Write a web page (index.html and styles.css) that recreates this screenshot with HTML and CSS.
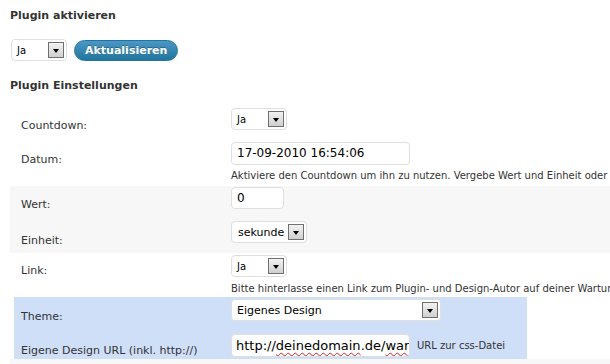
FILE: index.html
```html
<!DOCTYPE html>
<html lang="de">
<head>
    <meta charset="UTF-8">
    <title>Countdown Plugin</title>
    <link rel="stylesheet" href="styles.css">
</head>
<body>
<div class="wrap">
    <h3>Plugin aktivieren</h3>
    <div class="activate">
        <div class="select sel-ja"><span>Ja</span><i class="arrow"></i></div>
        <button class="button-primary">Aktualisieren</button>
    </div>
    <h3>Plugin Einstellungen</h3>
    <div class="form-table">
        <div class="row r-countdown">
            <div class="label">Countdown:</div>
            <div class="field">
                <div class="select sel-ja"><span>Ja</span><i class="arrow"></i></div>
            </div>
        </div>
        <div class="row r-datum">
            <div class="label">Datum:</div>
            <div class="field">
                <div class="text w-date">17-09-2010 16:54:06</div>
                <div class="desc">Aktiviere den Countdown um ihn zu nutzen. Vergebe Wert und Einheit oder wähle ein festes Datum.</div>
            </div>
        </div>
        <div class="row alt r-wert">
            <div class="label">Wert:</div>
            <div class="field">
                <div class="text w-wert">0</div>
            </div>
        </div>
        <div class="row alt r-einheit">
            <div class="label">Einheit:</div>
            <div class="field">
                <div class="select sel-unit"><span>sekunde</span><i class="arrow"></i></div>
            </div>
        </div>
        <div class="row r-link">
            <div class="label">Link:</div>
            <div class="field">
                <div class="select sel-ja"><span>Ja</span><i class="arrow"></i></div>
                <div class="desc">Bitte hinterlasse einen Link zum Plugin- und Design-Autor auf deiner Wartungsseite. Danke!</div>
            </div>
        </div>
        <div class="theme-box">
            <div class="row r-theme">
                <div class="label">Theme:</div>
                <div class="field">
                    <div class="select sel-theme"><span>Eigenes Design</span><i class="arrow"></i></div>
                </div>
            </div>
            <div class="row r-url">
                <div class="label">Eigene Design URL (inkl. http://)</div>
                <div class="field inline">
                    <div class="text w-url">http://<u>deinedomain</u>.de/<u>war</u></div>
                    <span class="hint">URL zur css-Datei</span>
                </div>
            </div>
        </div>
        <div class="row alt r-last"></div>
    </div>
</div>
</body>
</html>
```

FILE: styles.css
```css
html, body {
    margin: 0;
    padding: 0;
    background: #fff;
    overflow: hidden;
}
body {
    font-family: "DejaVu Sans", Verdana, sans-serif;
    font-size: 11px;
    color: #333;
}
.wrap {
    width: 800px;
    padding: 0 10px;
}
h3 {
    margin: 0;
    font-size: 11px;
    line-height: 15px;
    font-weight: bold;
    color: #333;
}
h3:first-child {
    padding-top: 8px;
}
.activate {
    display: flex;
    align-items: center;
    gap: 7px;
    margin: 16px 0 17px 1px;
}

/* fake selects */
.select {
    display: flex;
    align-items: center;
    justify-content: space-between;
    box-sizing: border-box;
    height: 22px;
    padding: 0 2px 0 5px;
    border: 1px solid #dfdfdf;
    border-radius: 4px;
    background: #fff;
    font-size: 11px;
    color: #000;
}
.sel-ja { width: 56px; }
.sel-ja span { font-size: 10px; }
.sel-unit { width: 76px; padding-left: 6px; font-size: 11px; }
.sel-theme { width: 210px; }
.arrow {
    box-sizing: border-box;
    width: 16px;
    height: 16px;
    border: 1px solid #6f6f6f;
    background: linear-gradient(#f2f2f2, #cfcfcf);
    position: relative;
    flex: none;
}
.arrow::after {
    content: "";
    position: absolute;
    left: 4px;
    top: 6px;
    border-left: 3px solid transparent;
    border-right: 3px solid transparent;
    border-top: 4px solid #000;
}

.button-primary {
    height: 21px;
    padding: 0 10px;
    border: 1px solid #21759b;
    border-radius: 11px;
    background: linear-gradient(#4b97c6, #21759b);
    color: #fff;
    font-family: "DejaVu Sans", Verdana, sans-serif;
    font-size: 11px;
    font-weight: bold;
    text-shadow: 0 -1px 0 rgba(0,0,0,.3);
}

.form-table {
    margin-top: 6px;
}
.row {
    display: grid;
    grid-template-columns: 221px 1fr;
}
.row.alt {
    background: #f7f7f7;
}
.label {
    padding-left: 11px;
    line-height: 15px;
    white-space: nowrap;
}
.field {
    white-space: nowrap;
}
.field .select {
    display: inline-flex;
}
.field.inline {
    display: flex;
    align-items: center;
    gap: 7px;
}
.text {
    box-sizing: border-box;
    height: 23px;
    line-height: 21px;
    padding: 0 5px;
    border: 1px solid #dfdfdf;
    border-radius: 4px;
    background: #fff;
    color: #000;
    font-size: 12px;
    overflow: hidden;
    white-space: nowrap;
}
.w-date { width: 179px; }
.w-wert { width: 53px; height: 22px; line-height: 20px; padding-left: 5px; }
.w-url { width: 179px; font-size: 13px; padding-left: 4px; }
.w-url u {
    text-decoration: underline wavy #e02020;
    text-decoration-thickness: 1px;
    text-underline-offset: 2px;
}
.desc {
    margin-top: 5px;
    font-size: 10px;
    line-height: 12px;
    color: #333;
}
.hint {
    font-size: 10px;
    color: #333;
}

/* per row spacing */
.r-countdown { padding-top: 9px; height: 40px; box-sizing: border-box; }
.r-countdown .label { padding-top: 10px; }
.r-datum { padding-top: 3px; height: 47px; box-sizing: border-box; }
.r-datum .label { padding-top: 10px; }
.r-wert { padding-top: 1px; height: 29px; box-sizing: border-box; }
.r-wert .label { padding-top: 10px; }
.r-einheit { padding-top: 6px; height: 38px; box-sizing: border-box; }
.r-einheit .label { padding-top: 12px; }
.r-link { padding-top: 2px; height: 44px; box-sizing: border-box; }
.r-link .label { padding-top: 8px; }
.r-link .desc { margin-top: 6px; }

.theme-box {
    margin-left: 4px;
    width: 513px;
    background: #cfdff8;
}
.theme-box .row {
    grid-template-columns: 217px 1fr;
}
.theme-box .label {
    padding-left: 7px;
}
.r-theme { padding-top: 2px; height: 30px; box-sizing: border-box; }
.r-theme .label { padding-top: 10px; }
.r-url { padding-top: 7px; height: 32px; box-sizing: border-box; }
.r-url .field { align-items: flex-start; }
.r-url .hint { line-height: 23px; }
.r-url .label { padding-top: 9px; }
.r-last { height: 20px; }
```
